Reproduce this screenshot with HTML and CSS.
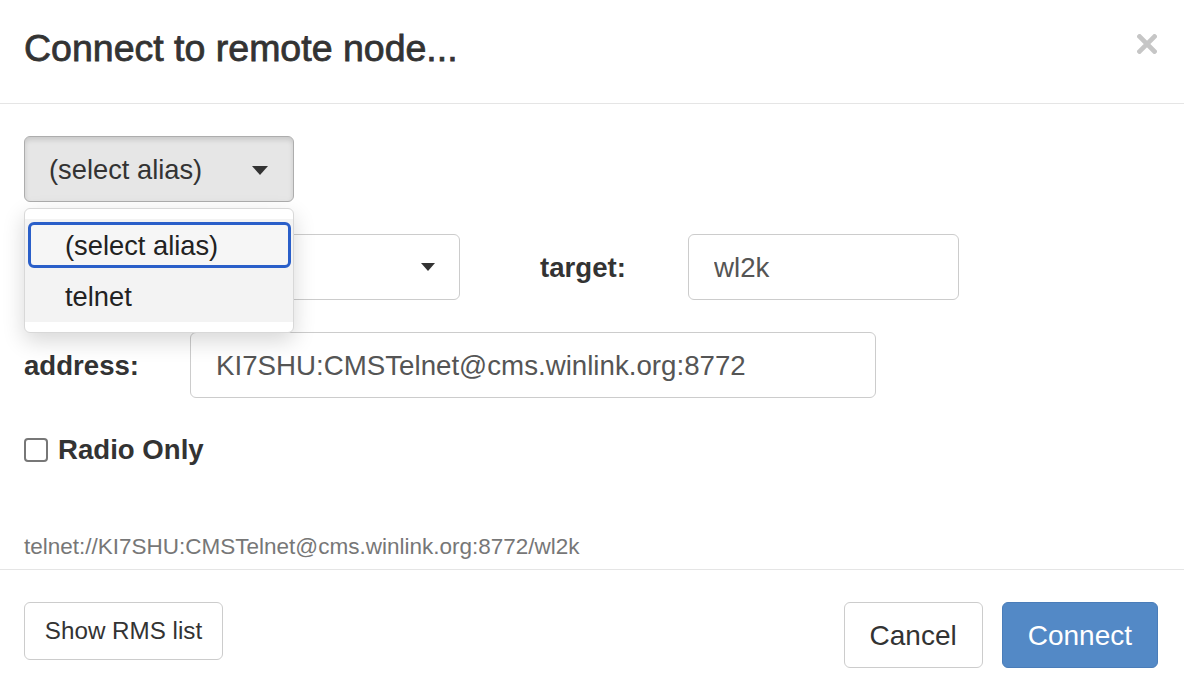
FILE: index.html
```html
<!DOCTYPE html>
<html>
<head>
<meta charset="utf-8">
<link rel="stylesheet" href="styles.css">
</head>
<body>
<div class="modal">
  <div class="modal-header">
    <h3 class="modal-title">Connect to remote node...</h3>
    <button class="close" aria-label="Close">
      <svg width="20" height="20" viewBox="0 0 20 20"><path d="M2.5 2.5L17.5 17.5M17.5 2.5L2.5 17.5" stroke="#c6c6c6" stroke-width="4.6" stroke-linecap="square" fill="none"/></svg>
    </button>
  </div>
  <div class="modal-body">
    <div class="alias-wrap">
      <button class="btn alias-btn"><span>(select alias)</span><span class="caret"></span></button>
      <ul class="alias-menu">
        <li class="alias-list">
          <div class="alias-item selected">(select alias)</div>
          <div class="alias-item item-telnet">telnet</div>
        </li>
      </ul>
    </div>
    <div class="form-row">
      <div class="lbl" aria-hidden="true"></div>
      <div class="select-box"><span class="caret small"></span></div>
      <label class="lbl lbl-target">target:</label>
      <input class="field field-target" type="text" value="wl2k">
    </div>
    <div class="form-row">
      <label class="lbl">address:</label>
      <input class="field field-address" type="text" value="KI7SHU:CMSTelnet@cms.winlink.org:8772">
    </div>
    <label class="check-row"><span class="check-box"></span><span>Radio Only</span></label>
    <div class="url">telnet://KI7SHU:CMSTelnet@cms.winlink.org:8772/wl2k</div>
  </div>
  <div class="modal-footer">
    <button class="btn btn-default btn-rms">Show RMS list</button>
    <div class="footer-right">
      <button class="btn btn-default btn-lg">Cancel</button>
      <button class="btn btn-primary btn-lg">Connect</button>
    </div>
  </div>
</div>
</body>
</html>
```
FILE: styles.css
```css
* { box-sizing: border-box; }
html, body {
  margin: 0;
  padding: 0;
  background: #fff;
}
body {
  font-family: "Liberation Sans", Arial, sans-serif;
  color: #333;
  width: 1184px;
  height: 696px;
  overflow: hidden;
}
.modal {
  width: 1184px;
  height: 696px;
  display: flex;
  flex-direction: column;
}
.modal-header {
  display: flex;
  justify-content: space-between;
  align-items: flex-start;
  padding: 21px 27px 27px 24px;
  border-bottom: 1px solid #e5e5e5;
}
.modal-title {
  margin: 0;
  font-size: 37.5px;
  line-height: 55px;
  font-weight: 400;
  color: #333;
  -webkit-text-stroke: 0.8px #333;
}
.close {
  margin-top: 13px;
  padding: 0;
  border: 0;
  background: none;
  width: 20px;
  height: 20px;
  display: block;
}
.close svg { display: block; }

.modal-body {
  padding: 32px 24px 6px 24px;
}
.btn {
  font-family: "Liberation Sans", Arial, sans-serif;
  color: #333;
  border-radius: 6px;
  cursor: pointer;
}
.alias-wrap {
  position: relative;
  width: 270px;
}
.alias-btn {
  width: 270px;
  height: 66px;
  display: flex;
  align-items: center;
  justify-content: space-between;
  padding: 2px 25px 0 24px;
  font-size: 27.3px;
  background: #e6e6e6;
  border: 1px solid #adadad;
  box-shadow: inset 0 3px 5px rgba(0,0,0,0.125);
}
.caret {
  width: 0;
  height: 0;
  border-left: 8px solid transparent;
  border-right: 8px solid transparent;
  border-top: 9px solid #333;
  margin-top: 0;
}
.caret.small {
  border-left-width: 7.5px;
  border-right-width: 7.5px;
  border-top-width: 8px;
}
.alias-menu {
  position: absolute;
  z-index: 10;
  top: 72px;
  left: 0;
  width: 270px;
  height: 125px;
  margin: 0;
  padding: 10px 0;
  list-style: none;
  background: #fff;
  border: 1px solid #d8d8d8;
  border-radius: 6px;
  box-shadow: 0 8px 22px rgba(0,0,0,0.16);
}
.alias-list {
  background: #f3f3f3;
  padding: 3px 2px 0 3px;
  height: 103px;
}
.alias-item {
  font-size: 27.3px;
  color: #222;
  height: 54px;
  line-height: 58px;
  padding-left: 37px;
}
.alias-item.selected {
  height: 46px;
  line-height: 42px;
  padding-left: 34px;
  border: 3px solid #2a5fc9;
  border-radius: 6px;
  background: #f6f6f6;
}

.form-row {
  display: flex;
  align-items: center;
  margin-top: 32px;
  height: 66px;
}
.lbl {
  flex: none;
  width: 166px;
  font-size: 27.6px;
  font-weight: 700;
  color: #333;
  padding-top: 2px;
}
.lbl-target {
  width: 148px;
  margin-left: 80px;
}
.select-box {
  width: 270px;
  height: 66px;
  border: 1px solid #ccc;
  border-radius: 6px;
  background: #fff;
  display: flex;
  align-items: center;
  justify-content: flex-end;
  padding-right: 24px;
}
.field {
  height: 66px;
  border: 1px solid #ccc;
  border-radius: 6px;
  padding: 2px 20px 0 25px;
  font-family: "Liberation Sans", Arial, sans-serif;
  font-size: 27.7px;
  color: #555;
  background: #fff;
  outline: none;
  -webkit-appearance: none;
  appearance: none;
  margin: 0;
}
.field-target { width: 271px; }
.field-address { width: 686px; }

.check-row {
  display: flex;
  align-items: center;
  gap: 10px;
  height: 30px;
  margin-top: 37px;
  font-size: 27.6px;
  font-weight: 700;
  color: #333;
}
.check-box {
  flex: none;
  width: 24px;
  height: 24px;
  border: 2px solid #777;
  border-radius: 4px;
  background: #fff;
}
.url {
  margin-top: 66px;
  font-size: 22.5px;
  line-height: 32px;
  color: #777;
}

.modal-footer {
  border-top: 1px solid #e5e5e5;
  padding: 32px 26px 0 24px;
  display: flex;
  justify-content: space-between;
  align-items: flex-start;
}
.footer-right {
  display: flex;
  gap: 19px;
}
.btn-default {
  background: #fff;
  border: 1px solid #ccc;
}
.btn-rms {
  width: 199px;
  height: 58px;
  padding: 0;
  font-size: 24.2px;
}
.btn-lg {
  height: 66px;
  padding: 2px 25px 0;
  font-size: 28px;
}
.btn-primary {
  background: #5389c6;
  border: 1px solid #4a7db9;
  color: #fff;
}
```
